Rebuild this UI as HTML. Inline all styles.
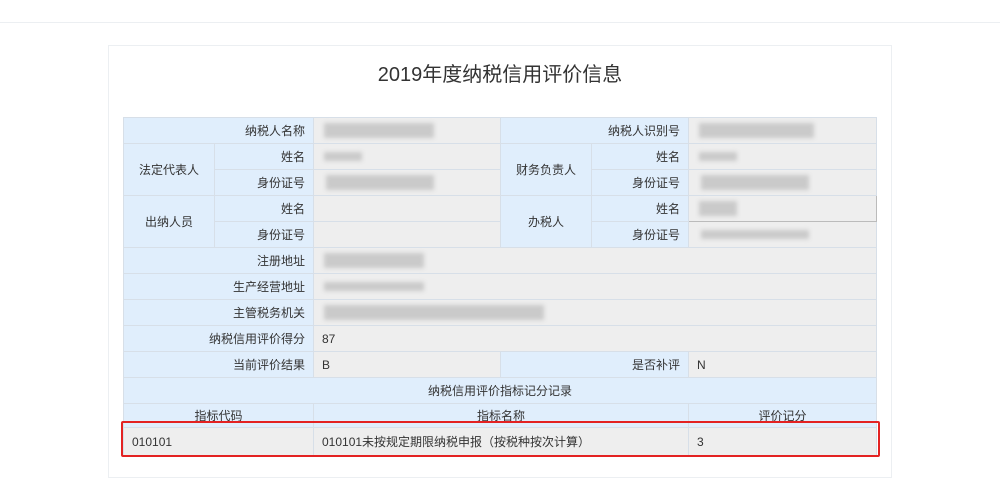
<!DOCTYPE html>
<html><head><meta charset="utf-8"><style>
body{margin:0;width:1000px;height:500px;background:#fff;font-family:"Liberation Sans","Noto Sans CJK SC",sans-serif;position:relative;overflow:hidden}
.topline{position:absolute;left:0;top:22px;width:1000px;height:1px;background:#eceff2}
.card{position:absolute;left:108px;top:45px;width:784px;height:433px;border:1px solid #eceff2;box-sizing:border-box}
h1{position:absolute;top:58px;left:0;width:1000px;text-align:center;margin:0;font-weight:normal;font-size:20px;color:#333}
table{position:absolute;left:123px;top:117px;border-collapse:collapse;table-layout:fixed;font-size:12px;color:#333}
td{border:1px solid #d7dfe8;height:26px;padding:0 8px;box-sizing:border-box;white-space:nowrap}
tr{height:26px}
.l{background:#e0eefc;text-align:right}
.c{background:#e0eefc;text-align:center}
.v{background:#eeeeee;position:relative}
.b{position:absolute;top:5px;height:15px;background:#cacaca;filter:blur(2px)}
.red{position:absolute;left:121px;top:421px;width:759px;height:36px;border:2px solid #e32222;box-sizing:border-box;border-radius:2px}
</style></head><body>
<div class="topline"></div>
<div class="card"></div>
<h1>2019年度纳税信用评价信息</h1>
<table>
<colgroup><col style="width:91px"><col style="width:99px"><col style="width:187px"><col style="width:91px"><col style="width:97px"><col style="width:188px"></colgroup>
<tr><td class="l" colspan="2">纳税人名称</td><td class="v"><div class="b" style="left:10px;width:110px"></div></td><td class="l" colspan="2">纳税人识别号</td><td class="v"><div class="b" style="left:10px;width:115px"></div></td></tr>
<tr><td class="c" rowspan="2">法定代表人</td><td class="l">姓名</td><td class="v"><div class="b" style="left:10px;width:38px;top:8px;height:9px"></div></td><td class="c" rowspan="2">财务负责人</td><td class="l">姓名</td><td class="v"><div class="b" style="left:10px;width:38px;top:8px;height:9px"></div></td></tr>
<tr><td class="l">身份证号</td><td class="v"><div class="b" style="left:12px;width:108px"></div></td><td class="l">身份证号</td><td class="v"><div class="b" style="left:12px;width:108px"></div></td></tr>
<tr><td class="c" rowspan="2">出纳人员</td><td class="l">姓名</td><td class="v"></td><td class="c" rowspan="2">办税人</td><td class="l">姓名</td><td class="v" style="border:1px solid #bbb"><div class="b" style="left:10px;width:38px"></div></td></tr>
<tr><td class="l">身份证号</td><td class="v"></td><td class="l">身份证号</td><td class="v"><div class="b" style="left:12px;width:108px;top:8px;height:9px"></div></td></tr>
<tr><td class="l" colspan="2">注册地址</td><td class="v" colspan="4"><div class="b" style="left:10px;width:100px"></div></td></tr>
<tr><td class="l" colspan="2">生产经营地址</td><td class="v" colspan="4"><div class="b" style="left:10px;width:100px;top:8px;height:9px"></div></td></tr>
<tr><td class="l" colspan="2">主管税务机关</td><td class="v" colspan="4"><div class="b" style="left:10px;width:220px"></div></td></tr>
<tr><td class="l" colspan="2">纳税信用评价得分</td><td class="v" colspan="4">87</td></tr>
<tr><td class="l" colspan="2">当前评价结果</td><td class="v">B</td><td class="l" colspan="2">是否补评</td><td class="v">N</td></tr>
<tr><td class="c" colspan="6">纳税信用评价指标记分记录</td></tr>
<tr style="height:24px"><td class="c" colspan="2" style="height:24px">指标代码</td><td class="c" colspan="3" style="height:24px">指标名称</td><td class="c" style="height:24px">评价记分</td></tr>
<tr style="height:28px"><td class="v" colspan="2" style="height:28px">010101</td><td class="v" colspan="3" style="height:28px">010101未按规定期限纳税申报（按税种按次计算）</td><td class="v" style="height:28px">3</td></tr>
</table>
<div class="red"></div>
</body></html>
